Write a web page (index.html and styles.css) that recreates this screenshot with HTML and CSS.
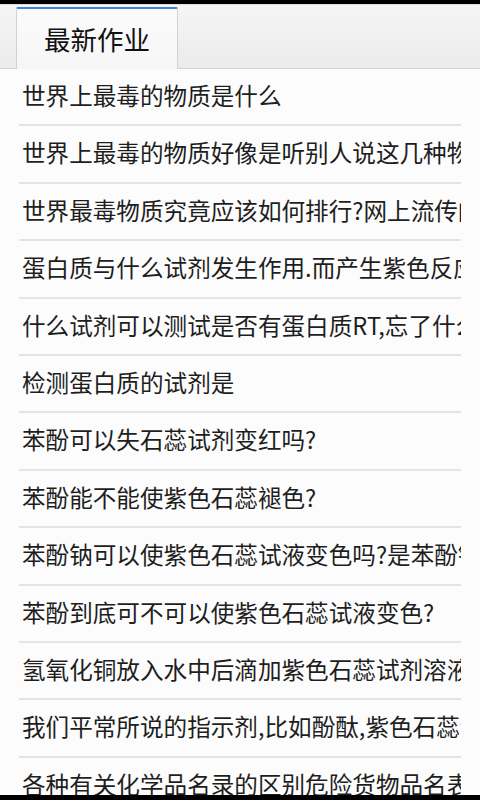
FILE: index.html
```html
<!DOCTYPE html>
<html lang="zh-CN">
<head>
    <meta charset="UTF-8">
    <meta name="viewport" content="width=device-width, initial-scale=1.0">
    <title>最新作业</title>
    <link rel="stylesheet" href="styles.css">
</head>
<body>
    <div class="status-bar"></div>
    <div class="tab-bar">
        <div class="tab-edge"></div>
        <div class="tab active">最新作业</div>
        <div class="tab-rest"></div>
    </div>
    <ul class="question-list">
        <li>世界上最毒的物质是什么</li>
        <li>世界上最毒的物质好像是听别人说这几种物质</li>
        <li>世界最毒物质究竟应该如何排行?网上流传的说法</li>
        <li>蛋白质与什么试剂发生作用.而产生紫色反应</li>
        <li>什么试剂可以测试是否有蛋白质RT,忘了什么试剂</li>
        <li>检测蛋白质的试剂是</li>
        <li>苯酚可以失石蕊试剂变红吗?</li>
        <li>苯酚能不能使紫色石蕊褪色?</li>
        <li>苯酚钠可以使紫色石蕊试液变色吗?是苯酚钠</li>
        <li>苯酚到底可不可以使紫色石蕊试液变色?</li>
        <li>氢氧化铜放入水中后滴加紫色石蕊试剂溶液</li>
        <li>我们平常所说的指示剂,比如酚酞,紫色石蕊试液</li>
        <li>各种有关化学品名录的区别危险货物品名表</li>
    </ul>
    <div class="nav-bar"></div>
</body>
</html>
```

FILE: styles.css
```css
body {
    margin: 0;
    background-color: #fcfcfc;
    font-family: "Noto Sans CJK SC", "Droid Sans Fallback", sans-serif;
    color: #1e1e1e;
    overflow: hidden;
    height: 800px;
}
.status-bar {
    height: 4px;
    background-color: #000;
}
.tab-bar {
    display: flex;
    height: 61px;
    padding-top: 2px;
    background: linear-gradient(#f5f5f5, #ebebeb);
    border-top: 1px solid #dcdcdc;
    border-bottom: 1px solid #d4d4d4;
}
.tab-edge {
    width: 16px;
    border-right: 1px solid #d2d2d2;
}
.tab {
    width: 160px;
    box-sizing: border-box;
    padding-top: 8px;
    font-size: 26.5px;
    line-height: 44px;
    text-align: center;
    color: #111;
}
.tab.active {
    background: linear-gradient(#fbfbfb, #f6f6f6);
    border-top: 2px solid #3d85d9;
    margin-bottom: -1px;
}
.tab-rest {
    flex: 1;
    border-left: 1px solid #d2d2d2;
}
.question-list {
    list-style: none;
    margin: 0 19px;
    padding: 0;
}
.question-list li {
    box-sizing: border-box;
    height: 57.4px;
    padding-left: 3px;
    border-bottom: 2px solid #e4e4e4;
    font-size: 23.6px;
    line-height: 52px;
    white-space: nowrap;
    overflow: hidden;
}
.nav-bar {
    position: fixed;
    left: 0;
    right: 0;
    bottom: 0;
    height: 5px;
    background-color: #000;
}
```
